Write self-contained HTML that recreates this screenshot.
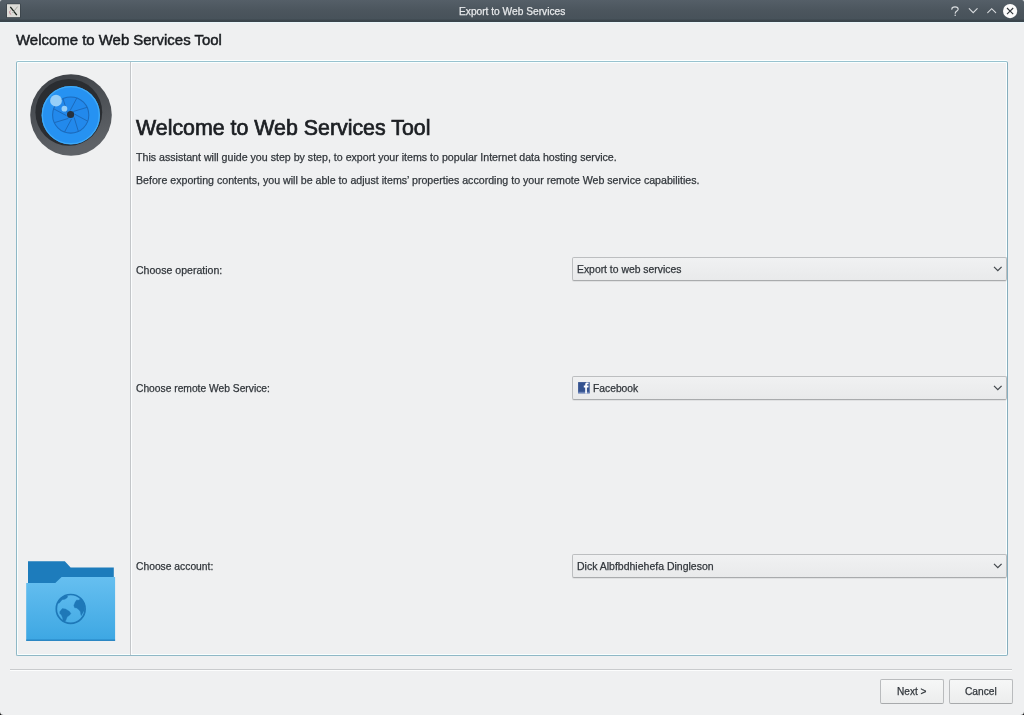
<!DOCTYPE html>
<html><head><meta charset="utf-8">
<style>
html,body{margin:0;padding:0;}
body{width:1024px;height:715px;overflow:hidden;background:#eff0f1;position:relative;font-family:"Liberation Sans",sans-serif;color:#31363b;}
.a{position:absolute;white-space:nowrap;line-height:1;will-change:transform;-webkit-text-stroke:0.25px currentColor;}
#tb{position:absolute;left:0;top:0;width:1024px;height:22px;background:linear-gradient(#555f68 0px,#4b555d 11px,#47525a 19px,#3c464d 20px,#3a444b 22px);}
#tbline{position:absolute;left:0;top:22px;width:1024px;height:1px;background:#e9f5fa;}
#frame{position:absolute;left:16px;top:61px;width:990px;height:593px;border:1px solid #8fb8c6;border-top-color:#98c2cf;border-right-color:#86adbd;border-radius:2px;box-sizing:content-box;box-shadow:inset 1px 1px 0 #f9ffff,inset -1px -1px 0 #f9ffff,0 -1px 0 #fbffff;}
#div{position:absolute;left:130px;top:62px;width:1px;height:593px;background:#c3c6c9;box-shadow:1px 0 0 #fbfdfe;}
.combo{position:absolute;left:572px;width:433px;height:22px;border:1px solid #bcbec0;border-bottom-color:#a9abad;border-radius:2px;background:linear-gradient(#f0f1f2,#e9eaeb);box-shadow:0 1px 0 rgba(0,0,0,0.06);}
.btn{position:absolute;top:679px;height:23px;border:1px solid #b9bbbd;border-bottom-color:#a8aaac;border-radius:2px;background:linear-gradient(#f6f7f7,#eceded);}
</style></head><body>
<div id="tb"></div>
<div id="tbline"></div>
<svg style="position:absolute;left:0;top:0" width="1024" height="22" viewBox="0 0 1024 22">
 <rect x="6.5" y="3.7" width="14" height="14" fill="#31393f"/><rect x="7" y="4.2" width="13" height="13" fill="#dcdcd8"/>
 <path d="M10.3 6.8 L16.8 15.2" stroke="#18201a" stroke-width="1.3"/>
 <path d="M17.6 6.6 L12.5 13" stroke="#9a9e9a" stroke-width="0.9"/>
 <path d="M10.6 10.5 C9 11.5 9.5 14 11.2 14.5" stroke="#c07a8a" stroke-width="0.9" fill="none"/>
 <g fill="none" stroke="#d9dcdf" stroke-width="1.1" stroke-linecap="round">
  <path d="M951.8 9.2 C951.8 7.3 953.3 6.9 955 6.9 C957 6.9 958.2 8 958.2 9.3 C958.2 10.8 955.2 11.3 955.2 13.2"/>
  <path d="M969.2 8.7 L973.2 12.7 L977.2 8.7"/>
  <path d="M987.7 12.7 L991.7 8.7 L995.7 12.7"/>
 </g>
 <circle cx="955.2" cy="15.3" r="0.75" fill="#d9dcdf"/>
 <circle cx="1010.1" cy="11.1" r="7.1" fill="#fbfbfb"/>
 <path d="M1007 8 L1013.2 14.2 M1013.2 8 L1007 14.2" stroke="#30363b" stroke-width="1.1"/>
</svg>

<div class="a" style="left:458.5px;top:7px;font-size:10.2px;color:#e6e8ea;">Export to Web Services</div>

<div class="a" style="left:16px;top:33.2px;font-size:14.95px;color:#1b1e22;-webkit-text-stroke:0.5px currentColor;">Welcome to Web Services Tool</div>

<div id="frame"></div>
<div id="div"></div>

<svg style="position:absolute;left:0;top:0" width="140" height="170" viewBox="0 0 140 170">
 <defs>
  <linearGradient id="ring" x1="0" y1="0" x2="0.3" y2="1">
   <stop offset="0" stop-color="#3b3f44"/><stop offset="1" stop-color="#5e6267"/>
  </linearGradient>
 </defs>
 <circle cx="71" cy="115" r="40.8" fill="url(#ring)"/>
 <circle cx="68.8" cy="112.3" r="33.4" fill="#2a2d31"/>
 <circle cx="70.8" cy="115.2" r="29.2" fill="#2692f2"/>
 <circle cx="70.8" cy="115.2" r="28.5" fill="none" stroke="#40abf7" stroke-width="1.3"/>
 <circle cx="70.7" cy="115" r="18.1" fill="#2289ec" stroke="#1c6abb" stroke-width="1.05"/>
 <g stroke="#1c6abb" stroke-width="1">
  <line x1="69.97" y1="110.86" x2="76.92" y2="97.90"/>
  <line x1="73.11" y1="111.56" x2="87.19" y2="107.31"/>
  <line x1="74.84" y1="114.27" x2="87.80" y2="121.22"/>
  <line x1="74.14" y1="117.41" x2="78.39" y2="131.49"/>
  <line x1="71.43" y1="119.14" x2="64.48" y2="132.10"/>
  <line x1="68.29" y1="118.44" x2="54.21" y2="122.69"/>
  <line x1="66.56" y1="115.73" x2="53.60" y2="108.78"/>
  <line x1="67.26" y1="112.59" x2="63.01" y2="98.51"/>
 </g>
 <circle cx="70.6" cy="114.5" r="3.6" fill="#27313d"/>
 <circle cx="56" cy="100.7" r="5.9" fill="#96cff8"/>
 <circle cx="64.4" cy="108.7" r="2.9" fill="#96cff8"/>
</svg>
<svg style="position:absolute;left:0;top:540" width="140" height="120" viewBox="0 540 140 120">
 <defs>
  <linearGradient id="fold" x1="0" y1="0" x2="0" y2="1">
   <stop offset="0" stop-color="#66bff0"/><stop offset="1" stop-color="#3da7e3"/>
  </linearGradient>
 </defs>
 <path d="M28 561.3 H64.8 L70.6 567.6 H113.8 V590 H28 Z" fill="#1d7cbc"/>
 <path d="M26.2 582.9 H55.3 L61.6 577 H115.1 V640.8 H26.2 Z" fill="url(#fold)"/>
 <rect x="26.2" y="639.6" width="88.9" height="1.2" fill="#1f7cbb"/>
 <g transform="translate(70.7 608.9)" fill="#1e78b8" stroke="#1e78b8" stroke-width="0.3" stroke-linejoin="round">
  <circle r="14.4" fill="none" stroke="#1e78b8" stroke-width="1.7"/>
  <path d="M5.9 -9 L4.4 -6.6 L3.1 -3.5 L3.9 -1.1 L5.9 -0.8 L8.1 0.8 L9.7 2.9 L10 5.1 L10.5 6.8 L13.8 1 L13.5 -5 L11.6 -8.8 L9.7 -9.8 L7.6 -8.7Z"/>
  <path d="M-11 2.9 L-8.4 -0.3 L-5.2 0 L-1.4 2.4 L0.2 4.5 L-0.9 6.1 L-3.6 8.2 L-4.6 10.9 L-5.7 12.8 L-7.6 12 L-8.2 8.8 L-9.3 6.1 L-10.9 4.5Z"/>
  <path d="M-13 -6.5 L-9.5 -10.8 L-6 -12.8 L-3 -13 L-3.5 -11.2 L-5.8 -9.6 L-8.5 -9.2 L-11.8 -5.5Z"/>
 </g>
</svg>


<div class="a" style="left:136px;top:117.5px;font-size:21.37px;color:#1c1f23;-webkit-text-stroke:0.7px currentColor;">Welcome to Web Services Tool</div>
<div class="a" style="left:136px;top:152.1px;font-size:10.64px;">This assistant will guide you step by step, to export your items to popular Internet data hosting service.</div>
<div class="a" style="left:136px;top:175px;font-size:10.64px;">Before exporting contents, you will be able to adjust items’ properties according to your remote Web service capabilities.</div>

<div class="a" style="left:136px;top:265px;font-size:10.55px;">Choose operation:</div>
<div class="combo" style="top:257px;"></div>
<div class="a" style="left:577px;top:265px;font-size:10.38px;">Export to web services</div>

<div class="a" style="left:136px;top:384px;font-size:10.28px;">Choose remote Web Service:</div>
<div class="combo" style="top:376px;"></div>
<div class="a" style="left:592.5px;top:384px;font-size:10.3px;">Facebook</div>

<div class="a" style="left:136px;top:561.5px;font-size:10.3px;">Choose account:</div>
<div class="combo" style="top:554px;"></div>
<div class="a" style="left:577px;top:561px;font-size:10.5px;">Dick Albfbdhiehefa Dingleson</div>


<svg style="position:absolute;left:0;top:0" width="1024" height="715" viewBox="0 0 1024 715">
 <g fill="none" stroke="#43484d" stroke-width="1.25">
  <path d="M994 266.9 L997.8 270.7 L1001.6 266.9"/>
  <path d="M994 385.9 L997.8 389.7 L1001.6 385.9"/>
  <path d="M994 563.9 L997.8 567.7 L1001.6 563.9"/>
 </g>
 <rect x="578.1" y="382.1" width="11.6" height="11.2" fill="#34528f"/>
 <rect x="578.1" y="391.8" width="11.6" height="1.5" fill="#6a82b8"/>
 <path d="M585.2 393.6 V387.6 H583.8 V385.6 H585.2 V384.4 C585.2 383 586 382.4 587.3 382.4 H588.6 V384.2 H587.6 C587.1 384.2 586.9 384.4 586.9 384.9 V385.6 H588.6 L588.4 387.6 H586.9 V393.6 Z" fill="#ffffff"/>
</svg>
<div style="position:absolute;left:10px;top:669px;width:1002px;height:1px;background:#c9cbcd;box-shadow:0 1px 0 #fcfdfd;"></div>
<div class="btn" style="left:880px;width:62px;"></div>
<div class="btn" style="left:949px;width:62px;"></div>
<div class="a" style="left:897px;top:687.2px;font-size:10.1px;">Next &gt;</div>
<div class="a" style="left:965px;top:687.2px;font-size:10.2px;">Cancel</div>

<svg style="position:absolute;left:0;top:0" width="1024" height="715" viewBox="0 0 1024 715">
 <path d="M1024 711.5 A3.5 3.5 0 0 1 1020.5 715 H1024Z" fill="#111"/>
 <path d="M0 711.5 A3.5 3.5 0 0 0 3.5 715 H0Z" fill="#111"/>
 <path d="M0 0 H2 A2 2 0 0 0 0 2Z" fill="#e8eaec"/>
 <path d="M1024 0 H1022 A2 2 0 0 1 1024 2Z" fill="#e8eaec"/>
</svg>
</body></html>
